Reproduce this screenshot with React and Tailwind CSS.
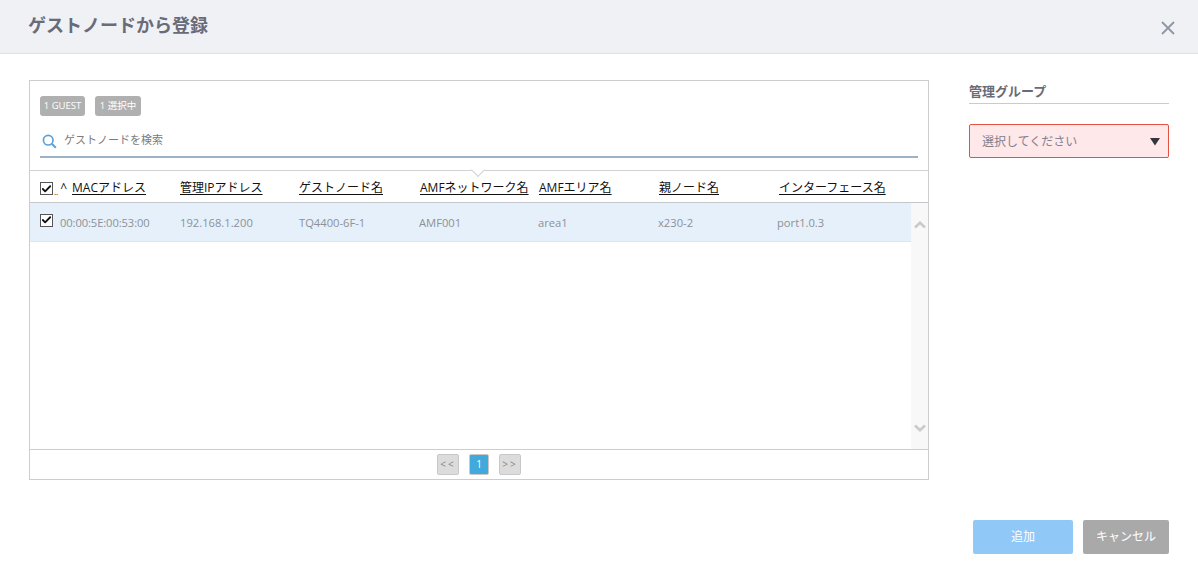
import React from 'react';
import { Check } from 'lucide-react';

const headers = [
  { label: '管理IPアドレス', w: 'w-[119px]' },
  { label: 'ゲストノード名', w: 'w-[121px]' },
  { label: 'AMFネットワーク名', w: 'w-[119px]' },
  { label: 'AMFエリア名', w: 'w-[120px]' },
  { label: '親ノード名', w: 'w-[120px]' },
  { label: 'インターフェース名', w: 'w-[120px]' },
];

const cells = [
  { text: '192.168.1.200', w: 'w-[119px]' },
  { text: 'TQ4400-6F-1', w: 'w-[120px]' },
  { text: 'AMF001', w: 'w-[119px]' },
  { text: 'area1', w: 'w-[120px]' },
  { text: 'x230-2', w: 'w-[119px]' },
  { text: 'port1.0.3', w: 'w-[120px]' },
];

function CheckBox() {
  return (
    <span className="flex h-[13px] w-[13px] shrink-0 items-center justify-center border border-[#555] bg-white">
      <Check size={12} strokeWidth={4} color="#111" />
    </span>
  );
}

function PageButton({ children, className }) {
  return (
    <span className={`flex h-[21px] items-center justify-center rounded-[2px] border border-[#c9c9c9] text-[10px] ${className}`}>
      {children}
    </span>
  );
}

export default function App() {
  return (
    <div className="flex h-[578px] w-[1198px] flex-col overflow-hidden bg-white font-['Open_Sans','Noto_Sans_CJK_JP',sans-serif]">
      <div className="flex h-[54px] shrink-0 items-center justify-between border-b border-[#dfe0e4] bg-[#f0f1f5] pl-[28px] pr-[23px]">
        <h1 className="-mt-[4px] text-[18px] font-bold leading-none text-[#686c78]">ゲストノードから登録</h1>
        <svg width="14" height="14" viewBox="0 0 14 14" className="mt-[3px]">
          <path d="M1 1 L13 13 M13 1 L1 13" stroke="#8e97a3" strokeWidth="1.8" fill="none" />
        </svg>
      </div>

      <div className="flex flex-1 items-start pl-[29px] pt-[26px]">
        <div className="flex h-[400px] w-[900px] flex-col border border-[#cdcdcd]">
          <div className="flex h-[89px] shrink-0 flex-col px-[10px] pt-[15px]">
            <div className="flex gap-[10px]">
              <span className="flex h-[20px] w-[45px] items-center justify-center rounded-[3px] bg-[#b0b0b0] pt-[1px] text-[9.5px] text-white">1 GUEST</span>
              <span className="flex h-[20px] w-[46px] items-center justify-center rounded-[3px] bg-[#b0b0b0] pt-[1px] text-[9.5px] text-white">1 選択中</span>
            </div>
            <div className="mt-[10px] flex h-[32px] items-center gap-[7px] border-b-2 border-[#9db2c4] pl-[2px]">
              <svg width="15" height="15" viewBox="0 0 15 15" className="mt-[1px] shrink-0">
                <circle cx="6.2" cy="6.2" r="4.8" stroke="#5ca0dc" strokeWidth="1.7" fill="none" />
                <path d="M9.8 9.8 L13.8 13.8" stroke="#5ca0dc" strokeWidth="2" fill="none" />
              </svg>
              <span className="-mt-[1px] text-[11px] text-[#7b7b7b]">ゲストノードを検索</span>
            </div>
          </div>

          <div className="relative flex h-[33px] shrink-0 items-center border-y border-[#cfd3d6] border-b-[#c4c8cc] pl-[10px] pt-[2px] text-[12px] text-[#111]">
            <span className="absolute left-[443px] top-[-6px] h-[10px] w-[10px] rotate-45 border-b border-r border-[#cfd3d6] bg-white" />
            <span className="flex w-[140px] items-center">
              <span className="mt-[2px]"><CheckBox /></span>
              <span className="ml-[1px] mt-[9px] text-[8px] leading-none">..</span>
              <span className="ml-[2px] text-[12px] leading-none">^</span>
              <span className="ml-[5px] underline underline-offset-2">MACアドレス</span>
            </span>
            {headers.map(h => (
              <span key={h.label} className={`${h.w} whitespace-nowrap underline underline-offset-2`}>{h.label}</span>
            ))}
          </div>

          <div className="flex min-h-0 flex-1">
            <div className="flex-1">
              <div className="flex h-[39px] items-center border-b border-[#dbe6ef] bg-[#e5f0fa] pl-[10px] pt-[2px] text-[11.2px] text-[#8d9098]">
                <span className="flex w-[140px] items-center">
                  <span className="-mt-[5px]"><CheckBox /></span>
                  <span className="ml-[7px] tracking-[-0.1px]">00:00:5E:00:53:00</span>
                </span>
                {cells.map(c => (
                  <span key={c.text} className={c.w}>{c.text}</span>
                ))}
              </div>
            </div>
            <div className="flex w-[17px] flex-col items-center justify-between bg-[#f8f8f8] pb-[17px] pt-[18px]">
              <svg width="12" height="8" viewBox="0 0 12 8">
                <path d="M1 6.5 L6 1.8 L11 6.5" stroke="#cacaca" strokeWidth="2.6" fill="none" />
              </svg>
              <svg width="12" height="8" viewBox="0 0 12 8">
                <path d="M1 1.5 L6 6.2 L11 1.5" stroke="#cacaca" strokeWidth="2.6" fill="none" />
              </svg>
            </div>
          </div>

          <div className="flex h-[30px] shrink-0 items-center justify-center gap-[10px] border-t border-[#cdcdcd]">
            <PageButton className="w-[22px] bg-[#dcdcdc] tracking-[2px] text-[#888]">{'<<'}</PageButton>
            <PageButton className="w-[20px] border-[#b5cfe0] bg-[#42a9dd] text-white">1</PageButton>
            <PageButton className="w-[22px] bg-[#dcdcdc] tracking-[2px] text-[#888]">{'>>'}</PageButton>
          </div>
        </div>

        <div className="ml-[40px] w-[200px]">
          <div className="flex h-[24px] items-start border-b border-[#cbcbcb] pt-[3px] text-[13px] font-bold leading-[17px] text-[#686c78]">管理グループ</div>
          <div className="mt-[20px] flex h-[34px] items-center justify-between rounded-[2px] border border-[#e4533f] bg-[#ffe8ea] pl-[12px] pr-[8px] pt-[1px] text-[12px] text-[#82808a]">
            <span>選択してください</span>
            <svg width="10" height="8" viewBox="0 0 10 8">
              <path d="M0 0 H10 L5 7.5 Z" fill="#33363c" />
            </svg>
          </div>
        </div>
      </div>

      <div className="flex shrink-0 justify-end gap-[10px] pb-[24px] pr-[29px]">
        <button className="h-[34px] w-[100px] rounded-[2px] bg-[#90c9f8] text-[12px] text-white">追加</button>
        <button className="h-[34px] w-[86px] rounded-[2px] bg-[#a9a9a9] text-[12px] text-white">キャンセル</button>
      </div>
    </div>
  );
}
